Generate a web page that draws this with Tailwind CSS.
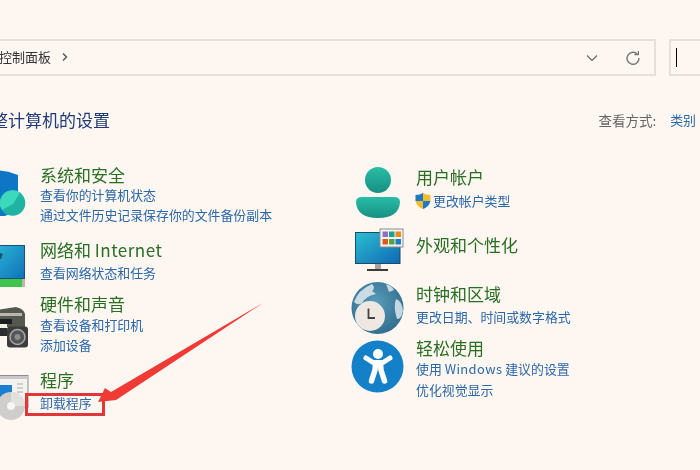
<!DOCTYPE html>
<html lang="zh-CN">
<head>
    <meta charset="UTF-8">
    <script src="https://cdn.jsdelivr.net/npm/@tailwindcss/browser@4"></script>
    <title>控制面板</title>
</head>
<body class="relative w-[700px] h-[470px] overflow-hidden bg-[#fdf6f1] font-['Noto_Sans_CJK_SC','Noto_Sans',sans-serif] text-[12.9px] text-[#2a68a8]">
    <div class="blur-[0.35px]">
        <!-- address bar -->
        <div class="flex gap-[13px] pt-[39px] -mr-px">
            <div class="flex-1 h-[37px] flex items-center -ml-px border-y-2 border-r-2 border-[#e6dfdb] text-[#333]">
                <span class="-mt-[2px] text-[13px]">控制面板</span>
                <svg width="8" height="10" viewBox="0 0 8 10" class="ml-[10px] -mt-[2px]" fill="none" stroke="#555" stroke-width="1.4"><path d="M2 1.5 5.5 5 2 8.5"/></svg>
                <svg width="12" height="8" viewBox="0 0 12 8" class="ml-auto" fill="none" stroke="#666" stroke-width="1.1"><path d="M1 1.5 6 6.5 11 1.5"/></svg>
                <svg width="16" height="16" viewBox="0 0 16 16" class="ml-[27px] mr-[13px]" fill="none" stroke="#777" stroke-width="1.4"><path d="M12.6 4.4A6 6 0 1 0 14 8"/><path d="M9.4 4.6h4V1" stroke-width="1.2"/></svg>
            </div>
            <div class="w-[32px] h-[37px] flex items-center border-y-2 border-l-2 border-[#e6dfdb] pl-[5px]">
                <div class="w-px h-[19px] bg-black"></div>
            </div>
        </div>

        <!-- heading -->
        <div class="flex items-center justify-between h-[22px] mt-[33px]">
            <h1 class="-ml-[9px] text-[17px] text-[#1f3a78]">整计算机的设置</h1>
            <div class="flex gap-[14px] mr-[4px]">
                <span class="text-[13.5px] text-[#666]">查看方式:</span>
                <span>类别</span>
            </div>
        </div>

        <div class="flex mt-[32px]">
            <!-- left column -->
            <div class="w-[350px]">
                <div class="flex h-[63px]">
                    <svg width="40" height="63" viewBox="0 163 40 63" class="shrink-0 overflow-visible">
                        <path d="M-8 170Q6 170 18 175V197Q18 210 5 216H-8Z" fill="#0f76c6"/>
                        <circle cx="12.5" cy="203" r="12.8" fill="#1fb3a2"/>
                        <path d="M12.5 190.2A12.8 12.8 0 0 0 2 210L13 204 20 192.5A12.8 12.8 0 0 0 12.5 190.2Z" fill="#3cd9bc"/>
                    </svg>
                    <div>
                        <div class="h-[20px] leading-[20px] mt-[2px] text-[17px] text-[#2a6e24]">系统和安全</div>
                        <div class="h-[20px] leading-[20px]">查看你的计算机状态</div>
                        <div class="h-[20px] leading-[20px]">通过文件历史记录保存你的文件备份副本</div>
                    </div>
                </div>
                <div class="flex h-[46px] mt-[12px]">
                    <svg width="40" height="46" viewBox="0 238 40 46" class="shrink-0 overflow-visible">
                        <defs><linearGradient id="net" x1="0" y1="0" x2="1" y2="1"><stop offset="0" stop-color="#2bb6d8"/><stop offset="1" stop-color="#0f72b8"/></linearGradient></defs>
                        <rect x="-6" y="245.500" width="30.500" height="33" fill="url(#net)" stroke="#1f4e78"/>
                        <path d="M0 253 3 254 1 259H0Z" fill="#1d4f70"/>
                        <rect x="-6" y="279" width="28" height="8" fill="#3fc44c"/>
                        <rect x="22" y="279" width="3" height="8" fill="#bdb6ac"/>
                    </svg>
                    <div>
                        <div class="h-[20px] leading-[20px] mt-[2px] text-[17px] text-[#2a6e24]">网络和 <span class="tracking-[0.5px]">Internet</span></div>
                        <div class="h-[20px] leading-[20px] mt-[3px]">查看网络状态和任务</div>
                    </div>
                </div>
                <div class="flex h-[64px] mt-[8px]">
                    <svg width="40" height="64" viewBox="0 292 40 64" class="shrink-0 overflow-visible">
                        <path d="M-4 310 16 307Q24 309 25 314V327H-4Z" fill="#56584f"/>
                        <rect x="-4" y="313" width="26" height="3" fill="#b9b6ae"/>
                        <rect x="-4" y="319" width="16" height="5" fill="#1d1d1d"/>
                        <rect x="-4" y="324" width="11" height="4" fill="#f3f0ea"/>
                        <rect x="-4" y="328" width="11" height="8" fill="#2c2c2c"/>
                        <rect x="7" y="326.500" width="21" height="21" rx="3" fill="#3c3c3c"/>
                        <circle cx="17.500" cy="337" r="7.500" fill="#555" stroke="#a8a8a8" stroke-width="1.500"/>
                        <circle cx="17.500" cy="337" r="3" fill="#8c8c8c"/>
                    </svg>
                    <div>
                        <div class="h-[20px] leading-[20px] mt-[2px] text-[17px] text-[#2a6e24]">硬件和声音</div>
                        <div class="h-[20px] leading-[20px] mt-px">查看设备和打印机</div>
                        <div class="h-[20px] leading-[20px]">添加设备</div>
                    </div>
                </div>
                <div class="flex h-[46px] mt-[12px]">
                    <svg width="40" height="46" viewBox="0 368 40 46" class="shrink-0 overflow-visible">
                        <rect x="-4" y="375.500" width="32" height="32" fill="#f4f2ef" stroke="#8d8d8d"/>
                        <rect x="-4" y="376" width="32" height="3" fill="#c9c9c9"/>
                        <path d="M-4 385H12V400H-4Z" fill="#1a7fd2"/>
                        <path d="M17 384H23M17 388H23M17 392H23" stroke="#a9a9a9" stroke-width="1.200"/>
                        <circle cx="11" cy="406" r="14" fill="#cfcecb"/>
                        <path d="M11 392A14 14 0 0 1 25 406H15A4 4 0 0 0 11 402Z" fill="#e2e1de"/>
                        <circle cx="11" cy="406" r="4" fill="#f6f5f3"/>
                    </svg>
                    <div>
                        <div class="h-[20px] leading-[20px] mt-[2px] text-[17px] text-[#2a6e24]">程序</div>
                        <div class="h-[20px] leading-[20px] mt-[3px]">卸载程序</div>
                    </div>
                </div>
            </div>

            <!-- right column -->
            <div class="pt-[2px]">
                <div class="flex h-[46px]">
                    <svg width="66" height="46" viewBox="350 165 66 46" class="shrink-0 overflow-visible">
                        <defs><linearGradient id="usr" x1="0" y1="0" x2="0" y2="1"><stop offset="0" stop-color="#29bda6"/><stop offset="1" stop-color="#178f82"/></linearGradient></defs>
                        <circle cx="378" cy="180" r="13" fill="url(#usr)"/>
                        <path d="M362 197H394Q400 197 400 202Q399 218 378 218Q357 218 356 202Q356 197 362 197Z" fill="url(#usr)"/>
                    </svg>
                    <div>
                        <div class="h-[20px] leading-[20px] mt-[2px] text-[17px] text-[#2a6e24]">用户帐户</div>
                        <div class="flex items-center h-[20px] leading-[20px] mt-[4px] -ml-[1px]">
                            <svg width="16" height="16" viewBox="0 0 16 16" class="shrink-0 mr-[2px]">
                                <path d="M8 0Q11 2 15.500 2V8H8Z" fill="#f3bd2e"/>
                                <path d="M8 0Q5 2 .5 2V8H8Z" fill="#1f79c4"/>
                                <path d="M.5 8H8V16Q2 14 .5 8Z" fill="#f3bd2e"/>
                                <path d="M15.500 8H8V16Q14 14 15.500 8Z" fill="#1f79c4"/>
                            </svg>
                            更改帐户类型
                        </div>
                    </div>
                </div>
                <div class="flex h-[24px] mt-[22px]">
                    <svg width="66" height="24" viewBox="350 233 66 24" class="shrink-0 overflow-visible">
                        <defs><linearGradient id="mon" x1="0" y1="0" x2="1" y2="1"><stop offset="0" stop-color="#2cbfd0"/><stop offset="1" stop-color="#0f68b4"/></linearGradient></defs>
                        <rect x="355.500" y="232.500" width="44.500" height="31" fill="url(#mon)" stroke="#1f4a66"/>
                        <rect x="375" y="264" width="6" height="5" fill="#a8a39b"/>
                        <rect x="367" y="269" width="21" height="2" fill="#3a3a3a"/>
                        <rect x="380" y="229" width="23" height="18" fill="#f6f4f0" stroke="#8b8b8b"/>
                        <rect x="382.500" y="231.500" width="5.500" height="5.500" fill="#8e6fc0"/>
                        <rect x="389" y="231.500" width="5.500" height="5.500" fill="#18a29a"/>
                        <rect x="395.500" y="231.500" width="5.500" height="5.500" fill="#ee8a1d"/>
                        <rect x="382.500" y="239" width="5.500" height="5.500" fill="#de5a1c"/>
                        <rect x="389" y="239" width="5.500" height="5.500" fill="#4fa83d"/>
                        <rect x="395.500" y="239" width="5.500" height="5.500" fill="#1f7cc4"/>
                    </svg>
                    <div class="h-[20px] leading-[20px] mt-[2px] text-[17px] text-[#2a6e24]">外观和个性化</div>
                </div>
                <div class="flex h-[45px] mt-[25px]">
                    <svg width="66" height="45" viewBox="350 282 66 45" class="shrink-0 overflow-visible">
                        <defs><radialGradient id="glb" cx="0.45" cy="0.4" r="0.65"><stop offset="0" stop-color="#5a9cbb"/><stop offset="1" stop-color="#2f6c8c"/></radialGradient></defs>
                        <circle cx="377.500" cy="308" r="26" fill="url(#glb)"/>
                        <path d="M354 302Q358 290 372 284Q376 288 372 291L376 294Q366 296 362 303Q358 306 354 302Z" fill="#c9dbe3"/>
                        <path d="M386 284Q392 286 394 290L389 292Z" fill="#c9dbe3"/>
                        <path d="M396 299Q402 301 403 311Q401 320 397 319Q393 307 396 299Z" fill="#c5d8e1"/>
                        <circle cx="370" cy="316" r="15" fill="#efe8e2"/>
                        <path d="M368.500 308.500V318H375" fill="none" stroke="#444" stroke-width="1.800"/>
                    </svg>
                    <div>
                        <div class="h-[20px] leading-[20px] mt-[2px] text-[17px] text-[#2a6e24]">时钟和区域</div>
                        <div class="h-[20px] leading-[20px] mt-[3px]">更改日期、时间或数字格式</div>
                    </div>
                </div>
                <div class="flex h-[63px] mt-[9px]">
                    <svg width="66" height="63" viewBox="350 336 66 63" class="shrink-0 overflow-visible">
                        <circle cx="377.500" cy="366.500" r="26" fill="#1380c8"/>
                        <circle cx="378" cy="354" r="5" fill="#fff"/>
                        <path d="M366 358 373 362.500H383L390 358" fill="none" stroke="#fff" stroke-width="5" stroke-linecap="round" stroke-linejoin="round"/>
                        <path d="M375.500 363 375 370 371.500 381M380.500 363 381 370 384.500 381" fill="none" stroke="#fff" stroke-width="5.500" stroke-linecap="round" stroke-linejoin="round"/>
                    </svg>
                    <div>
                        <div class="h-[20px] leading-[20px] mt-[2px] text-[17px] text-[#2a6e24]">轻松使用</div>
                        <div class="h-[20px] leading-[20px] mt-px">使用 <span class="tracking-[0.4px]">Windows</span> 建议的设置</div>
                        <div class="h-[20px] leading-[20px] mt-px">优化视觉显示</div>
                    </div>
                </div>
            </div>
        </div>
    </div>

    <!-- annotation over the screenshot -->
    <div class="absolute left-[25px] top-[393px] w-[80px] h-[23px] border-[3px] border-[#e0383a]"></div>
    <svg class="absolute left-0 top-0" width="700" height="470" viewBox="0 0 700 470">
        <path d="M98 402 105 388 111 392 263 303 116 400Z" fill="#ef3a36"/>
    </svg>
</body>
</html>
